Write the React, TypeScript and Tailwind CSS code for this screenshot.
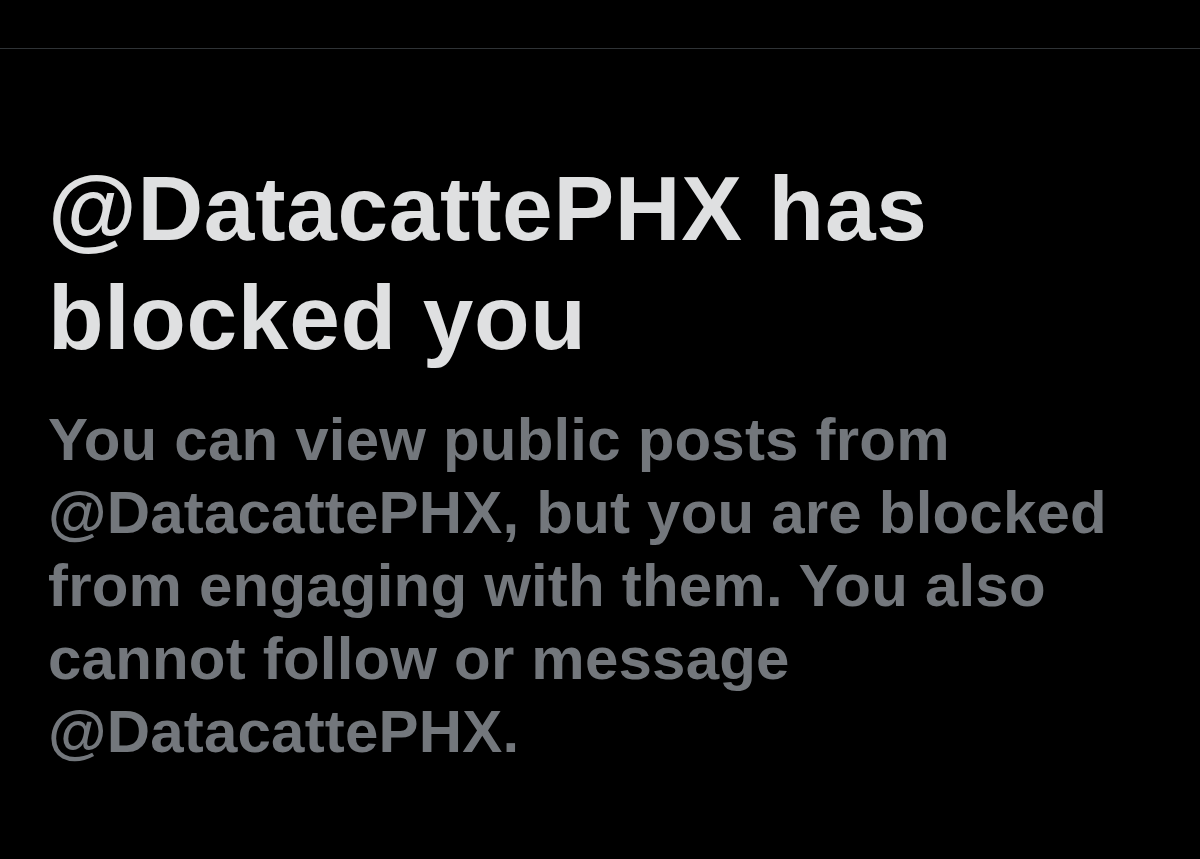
import React from 'react';

const handle = '@DatacattePHX';

const BlockedNotice: React.FC = () => {
  return (
    <section className="pl-12 pr-12 pt-[105px]">
      <h1 className="text-[91px] leading-[109px] font-bold tracking-[0.7px] text-[#dfe0e1]">
        {handle} has blocked you
      </h1>
      <p className="mt-[31px] text-[60px] leading-[73px] font-bold tracking-[0.2px] text-[#73777c]">
        You can view public posts from {handle}, but you are blocked from engaging with them. You
        also cannot follow or message {handle}.
      </p>
    </section>
  );
};

const App: React.FC = () => {
  return (
    <div className="min-h-screen bg-black font-['Liberation_Sans',Arial,sans-serif]">
      <div className="h-[49px] border-b border-[#2f3336]" />
      <BlockedNotice />
    </div>
  );
};

export default App;
